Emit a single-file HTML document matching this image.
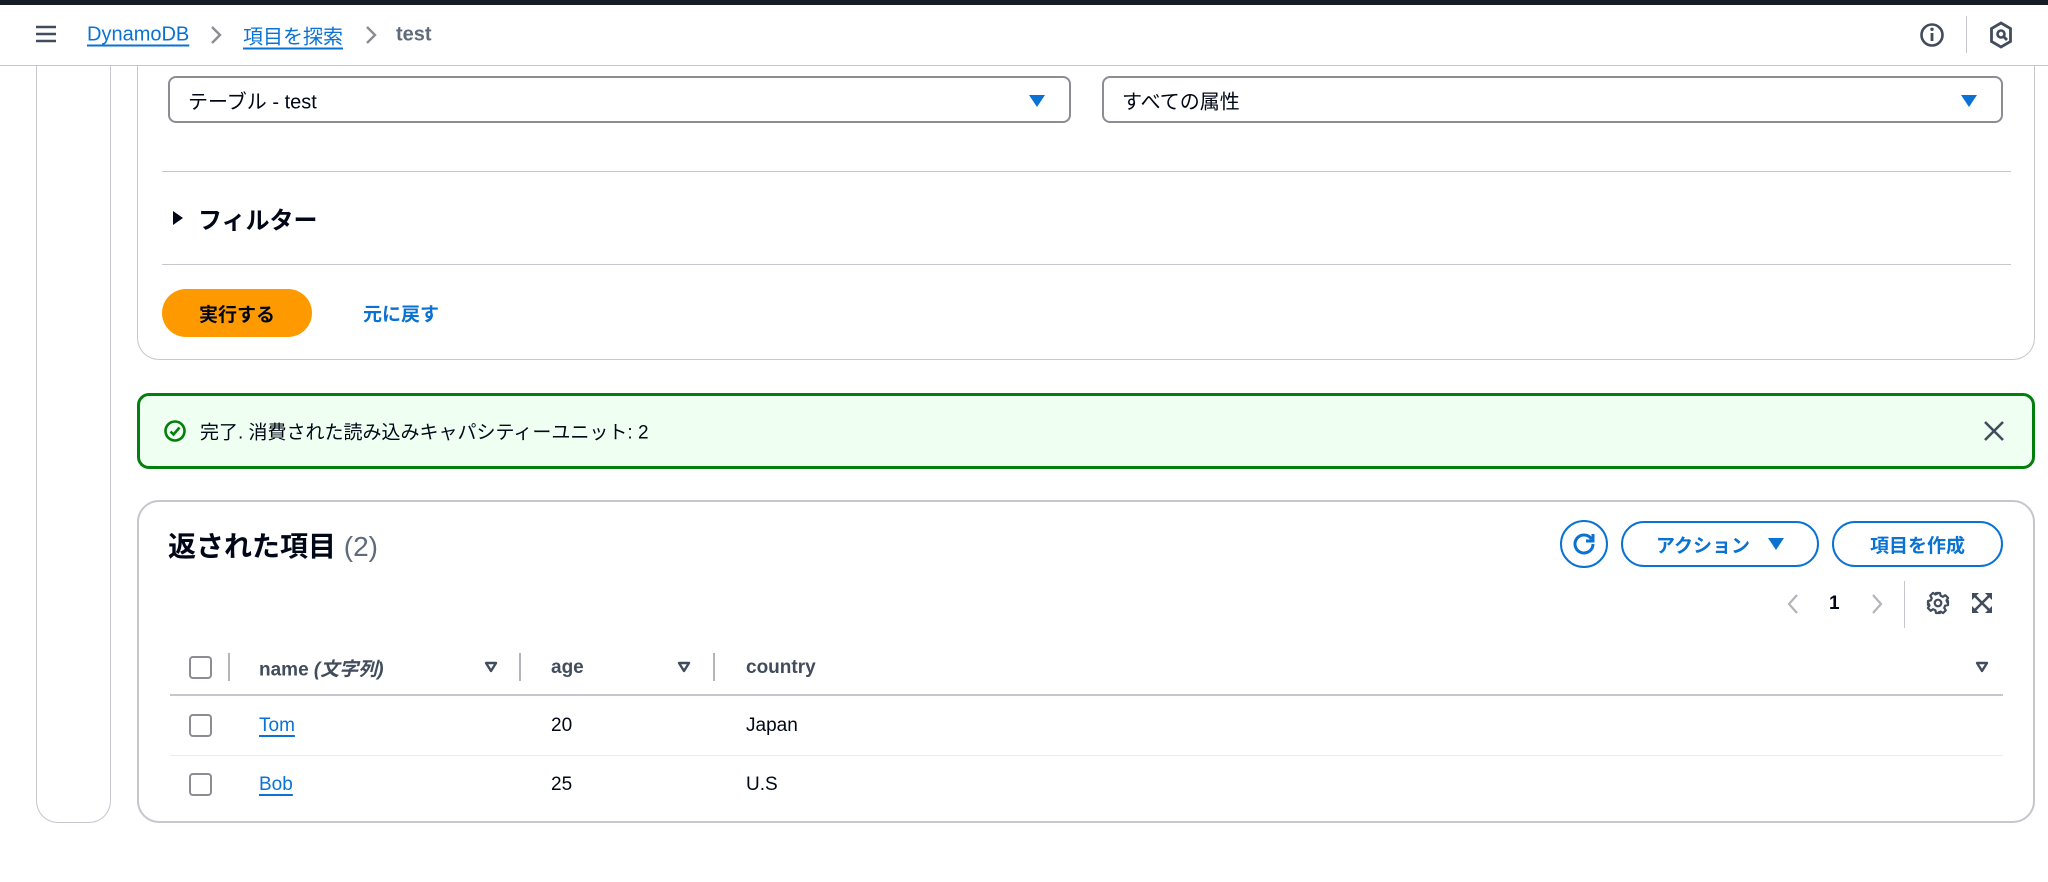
<!DOCTYPE html>
<html><head><meta charset="utf-8"><style>
*{margin:0;padding:0;box-sizing:border-box}
body{width:2048px;height:882px;background:#fff;font-family:"Liberation Sans","Noto Sans CJK JP",sans-serif;color:#000716;position:relative;overflow:hidden}
.a{position:absolute}
.topbar{left:0;top:0;width:2048px;height:5px;background:#161d26}
.hdr{left:0;top:5px;width:2048px;height:61px;border-bottom:1px solid #c6c6cd;background:#fff}
.lnk{color:#0972d3;text-decoration:underline;text-underline-offset:4px;text-decoration-thickness:2px}
.vc{transform:translateY(-50%)}
.sel{height:47px;border:2px solid #8c8c94;border-radius:8px;background:#fff}
.sel span{position:absolute;left:18px;top:50%;transform:translateY(-50%);font-size:20px}
.tri{width:0;height:0;border-left:8px solid transparent;border-right:8px solid transparent;border-top:12px solid #0972d3}
.hr{height:1px;background:#c6c6cd}
.btnb{border:2px solid #0972d3;border-radius:24px;color:#0972d3;font-weight:bold;font-size:19px;display:flex;align-items:center;justify-content:center}
.cb{width:23px;height:23px;border:2px solid #8c8c94;border-radius:4px}
.th{font-weight:bold;font-size:19px;color:#414d5c}
.td{font-size:19px}
.sep{width:2px;height:28px;background:#b4b4bb}
</style></head><body>
<div class="a topbar"></div>
<div class="a hdr"></div>
<svg class="a" style="left:35px;top:24px" width="22" height="20" viewBox="0 0 22 20"><path d="M1 3h20M1 10h20M1 17h20" stroke="#414d5c" stroke-width="2.6"/></svg>
<div class="a vc lnk" style="left:87px;top:35px;font-size:20px">DynamoDB</div>
<svg class="a" style="left:209px;top:25px" width="14" height="20" viewBox="0 0 14 20"><path d="M3 2l8 8-8 8" fill="none" stroke="#8c8c94" stroke-width="2.4"/></svg>
<div class="a vc lnk" style="left:243px;top:35px;font-size:20px">項目を探索</div>
<svg class="a" style="left:364px;top:25px" width="14" height="20" viewBox="0 0 14 20"><path d="M3 2l8 8-8 8" fill="none" stroke="#8c8c94" stroke-width="2.4"/></svg>
<div class="a vc" style="left:396px;top:35px;font-size:20px;font-weight:bold;color:#5f6b7a">test</div>
<svg class="a" style="left:1919px;top:22px" width="26" height="26" viewBox="0 0 26 26"><circle cx="13" cy="13" r="10.5" fill="none" stroke="#414d5c" stroke-width="2.6"/><path d="M13 11v8" stroke="#414d5c" stroke-width="2.8"/><circle cx="13" cy="7.3" r="1.7" fill="#414d5c"/></svg>
<div class="a" style="left:1966px;top:16px;width:1px;height:37px;background:#c6c6cd"></div>
<svg class="a" style="left:1989px;top:21px" width="24" height="28" viewBox="0 0 24 28"><path d="M12 2l9.5 5.5v13L12 26l-9.5-5.5v-13z" fill="none" stroke="#414d5c" stroke-width="2.8"/><circle cx="12" cy="13" r="3.5" fill="none" stroke="#414d5c" stroke-width="2.6"/><path d="M14 15l4 4" stroke="#414d5c" stroke-width="2.8"/></svg>

<div class="a" style="left:36px;top:40px;width:75px;height:783px;border:1px solid #c6c6cd;border-top:none;border-radius:0 0 22px 22px"></div>

<div class="a" style="left:137px;top:30px;width:1898px;height:330px;border:1px solid #c6c6cd;border-top:none;border-radius:0 0 22px 22px"></div>
<div class="a" style="left:0;top:5px;width:2048px;height:61px;background:#fff;border-bottom:1px solid #c6c6cd"></div>
<div class="a" style="left:0;top:0;width:2048px;height:5px;background:#161d26"></div>
<!-- re-draw header content over overlay -->
<svg class="a" style="left:35px;top:24px" width="22" height="20" viewBox="0 0 22 20"><path d="M1 3h20M1 10h20M1 17h20" stroke="#414d5c" stroke-width="2.6"/></svg>
<div class="a vc lnk" style="left:87px;top:35px;font-size:20px">DynamoDB</div>
<svg class="a" style="left:209px;top:25px" width="14" height="20" viewBox="0 0 14 20"><path d="M3 2l8 8-8 8" fill="none" stroke="#8c8c94" stroke-width="2.4"/></svg>
<div class="a vc lnk" style="left:243px;top:35px;font-size:20px">項目を探索</div>
<svg class="a" style="left:364px;top:25px" width="14" height="20" viewBox="0 0 14 20"><path d="M3 2l8 8-8 8" fill="none" stroke="#8c8c94" stroke-width="2.4"/></svg>
<div class="a vc" style="left:396px;top:35px;font-size:20px;font-weight:bold;color:#5f6b7a">test</div>
<svg class="a" style="left:1919px;top:22px" width="26" height="26" viewBox="0 0 26 26"><circle cx="13" cy="13" r="10.5" fill="none" stroke="#414d5c" stroke-width="2.6"/><path d="M13 11v8" stroke="#414d5c" stroke-width="2.8"/><circle cx="13" cy="7.3" r="1.7" fill="#414d5c"/></svg>
<div class="a" style="left:1966px;top:16px;width:1px;height:37px;background:#c6c6cd"></div>
<svg class="a" style="left:1989px;top:21px" width="24" height="28" viewBox="0 0 24 28"><path d="M12 2l9.5 5.5v13L12 26l-9.5-5.5v-13z" fill="none" stroke="#414d5c" stroke-width="2.8"/><circle cx="12" cy="13" r="3.5" fill="none" stroke="#414d5c" stroke-width="2.6"/><path d="M14 15l4 4" stroke="#414d5c" stroke-width="2.8"/></svg>

<div class="a sel" style="left:168px;top:76px;width:903px"><span>テーブル - test</span><div class="a tri" style="right:24px;top:17px"></div></div>
<div class="a sel" style="left:1102px;top:76px;width:901px"><span>すべての属性</span><div class="a tri" style="right:24px;top:17px"></div></div>
<div class="a hr" style="left:162px;top:171px;width:1849px"></div>
<svg class="a" style="left:172px;top:210px" width="12" height="16" viewBox="0 0 12 16"><path d="M1 1l10 7-10 7z" fill="#000716"/></svg>
<div class="a vc" style="left:198px;top:218px;font-size:24px;font-weight:bold">フィルター</div>
<div class="a hr" style="left:162px;top:264px;width:1849px"></div>
<div class="a" style="left:162px;top:289px;width:150px;height:48px;background:#ff9900;border-radius:24px;font-weight:bold;font-size:19px;display:flex;align-items:center;justify-content:center">実行する</div>
<div class="a vc" style="left:363px;top:313px;font-size:19px;font-weight:bold;color:#0972d3">元に戻す</div>

<div class="a" style="left:137px;top:393px;width:1898px;height:76px;border:3px solid #037f0c;border-radius:12px;background:#effff1"></div>
<svg class="a" style="left:163px;top:419px" width="24" height="24" viewBox="0 0 24 24"><circle cx="12" cy="12" r="9.5" fill="none" stroke="#037f0c" stroke-width="2.6"/><path d="M7.5 12.5l3 3 6-7" fill="none" stroke="#037f0c" stroke-width="2.6"/></svg>
<div class="a vc" style="left:200px;top:431px;font-size:19px">完了. 消費された読み込みキャパシティーユニット: 2</div>
<svg class="a" style="left:1983px;top:420px" width="22" height="22" viewBox="0 0 22 22"><path d="M2 2l18 18M20 2L2 20" stroke="#414d5c" stroke-width="2.6"/></svg>

<div class="a" style="left:137px;top:500px;width:1898px;height:323px;border:2px solid #c6c6cd;border-radius:22px"></div>
<div class="a vc" style="left:168px;top:545px;font-size:28px;font-weight:bold">返された項目 <span style="font-weight:normal;color:#5f6b7a">(2)</span></div>
<div class="a" style="left:1560px;top:520px;width:48px;height:48px;border:2px solid #0972d3;border-radius:50%"></div>
<svg class="a" style="left:1570px;top:530px" width="28" height="28" viewBox="0 0 28 28"><path d="M21.5 9A9 9 0 1 0 23 14" fill="none" stroke="#0972d3" stroke-width="3"/><path d="M23 4v7h-7" fill="none" stroke="#0972d3" stroke-width="3"/></svg>
<div class="a btnb" style="left:1621px;top:521px;width:198px;height:46px">アクション<div class="tri" style="margin-left:18px;border-top-color:#0972d3"></div></div>
<div class="a btnb" style="left:1832px;top:521px;width:171px;height:46px">項目を作成</div>
<svg class="a" style="left:1786px;top:593px" width="14" height="22" viewBox="0 0 14 22"><path d="M11 2l-8 9 8 9" fill="none" stroke="#b4b4bb" stroke-width="2.2"/></svg>
<div class="a vc" style="left:1829px;top:604px;font-size:19px;font-weight:bold">1</div>
<svg class="a" style="left:1870px;top:593px" width="14" height="22" viewBox="0 0 14 22"><path d="M3 2l8 9-8 9" fill="none" stroke="#b4b4bb" stroke-width="2.2"/></svg>
<div class="a" style="left:1904px;top:581px;width:1px;height:47px;background:#c6c6cd"></div>
<svg class="a" style="left:1926px;top:591px" width="24" height="24" viewBox="0 0 24 24"><path d="M10 2h4l.6 2.8 2.3 1 2.4-1.6 2.8 2.8-1.6 2.4 1 2.3L22 10v4l-2.8.6-1 2.3 1.6 2.4-2.8 2.8-2.4-1.6-2.3 1L14 22h-4l-.6-2.8-2.3-1-2.4 1.6-2.8-2.8 1.6-2.4-1-2.3L2 14v-4l2.8-.6 1-2.3-1.6-2.4 2.8-2.8 2.4 1.6 2.3-1z" fill="none" stroke="#414d5c" stroke-width="2.2" stroke-linejoin="round"/><circle cx="12" cy="12" r="3.3" fill="none" stroke="#414d5c" stroke-width="2.2"/></svg>
<svg class="a" style="left:1971px;top:592px" width="22" height="22" viewBox="0 0 22 22"><path d="M1 1h7L1 8zM21 1h-7l7 7zM1 21h7l-7-7zM21 21h-7l7-7z" fill="#414d5c"/><path d="M4 4l14 14M18 4L4 18" stroke="#414d5c" stroke-width="2.6"/></svg>

<div class="a cb" style="left:189px;top:656px"></div>
<div class="a sep" style="left:228px;top:653px"></div>
<div class="a vc th" style="left:259px;top:668px">name <i style="font-weight:bold">(文字列)</i></div>
<svg class="a" style="left:484px;top:661px" width="14" height="12" viewBox="0 0 14 12"><path d="M2 2h10l-5 8z" fill="none" stroke="#414d5c" stroke-width="2.4" stroke-linejoin="round"/></svg>
<div class="a sep" style="left:519px;top:653px"></div>
<div class="a vc th" style="left:551px;top:668px">age</div>
<svg class="a" style="left:677px;top:661px" width="14" height="12" viewBox="0 0 14 12"><path d="M2 2h10l-5 8z" fill="none" stroke="#414d5c" stroke-width="2.4" stroke-linejoin="round"/></svg>
<div class="a sep" style="left:713px;top:653px"></div>
<div class="a vc th" style="left:746px;top:668px">country</div>
<svg class="a" style="left:1975px;top:661px" width="14" height="12" viewBox="0 0 14 12"><path d="M2 2h10l-5 8z" fill="none" stroke="#414d5c" stroke-width="2.4" stroke-linejoin="round"/></svg>
<div class="a" style="left:170px;top:694px;width:1833px;height:2px;background:#c6c6cd"></div>

<div class="a cb" style="left:189px;top:714px"></div>
<div class="a vc td lnk" style="left:259px;top:726px">Tom</div>
<div class="a vc td" style="left:551px;top:726px">20</div>
<div class="a vc td" style="left:746px;top:726px">Japan</div>
<div class="a" style="left:170px;top:755px;width:1833px;height:1px;background:#e9ebed"></div>
<div class="a cb" style="left:189px;top:773px"></div>
<div class="a vc td lnk" style="left:259px;top:785px">Bob</div>
<div class="a vc td" style="left:551px;top:785px">25</div>
<div class="a vc td" style="left:746px;top:785px">U.S</div>
</body></html>
